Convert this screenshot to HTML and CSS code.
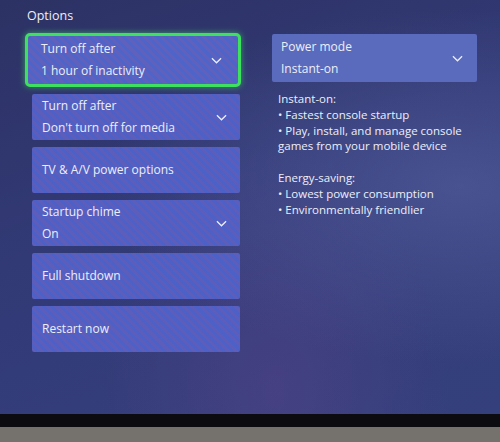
FILE: index.html
```html
<!DOCTYPE html>
<html lang="en">

<head>
    <meta charset="UTF-8">
    <meta name="viewport" content="width=device-width, initial-scale=1.0">
    <title>Power options</title>
    <link rel="stylesheet" href="styles.css">
</head>

<body>
    <div class="screen">
        <div class="left-col">
            <h2 class="section-title">Options</h2>
            <div class="option-list">
                <div class="option-card focused">
                    <div class="option-text">
                        <span>Turn off after</span>
                        <span>1 hour of inactivity</span>
                    </div>
                    <svg class="chevron" viewBox="0 0 12 7"><polyline points="1,1 6,6 11,1" /></svg>
                </div>
                <div class="option-card">
                    <div class="option-text">
                        <span>Turn off after</span>
                        <span>Don't turn off for media</span>
                    </div>
                    <svg class="chevron" viewBox="0 0 12 7"><polyline points="1,1 6,6 11,1" /></svg>
                </div>
                <div class="option-card">
                    <div class="option-text">
                        <span>TV &amp; A/V power options</span>
                    </div>
                </div>
                <div class="option-card">
                    <div class="option-text">
                        <span>Startup chime</span>
                        <span>On</span>
                    </div>
                    <svg class="chevron" viewBox="0 0 12 7"><polyline points="1,1 6,6 11,1" /></svg>
                </div>
                <div class="option-card">
                    <div class="option-text">
                        <span>Full shutdown</span>
                    </div>
                </div>
                <div class="option-card">
                    <div class="option-text">
                        <span>Restart now</span>
                    </div>
                </div>
            </div>
        </div>

        <div class="right-col">
            <div class="option-card power-mode">
                <div class="option-text">
                    <span>Power mode</span>
                    <span>Instant-on</span>
                </div>
                <svg class="chevron" viewBox="0 0 12 7"><polyline points="1,1 6,6 11,1" /></svg>
            </div>
            <div class="mode-info">
                <p>Instant-on:<br>
                    • Fastest console startup<br>
                    • Play, install, and manage console<br>
                    games from your mobile device</p>
                <p>Energy-saving:<br>
                    • Lowest power consumption<br>
                    • Environmentally friendlier</p>
            </div>
        </div>
    </div>
    <div class="bezel"></div>
    <div class="floor"></div>
</body>

</html>
```

FILE: styles.css
```css
:root {
    --card-bg: #4f5fc0;
    --card-bg-light: #5a6abc;
    --focus-color: #3fe060;
    --text-color: #eceff9;
}

* {
    box-sizing: border-box;
    margin: 0;
    padding: 0;
}

body {
    width: 500px;
    height: 442px;
    overflow: hidden;
    background-color: #75716d;
    font-family: "Open Sans", "Noto Sans", sans-serif;
    color: var(--text-color);
}

.screen {
    height: 414px;
    display: flex;
    gap: 32px;
    padding: 6px 23px 0 32px;
    background:
        radial-gradient(ellipse at 92% 45%, rgba(95, 105, 170, 0.5), transparent 55%),
        radial-gradient(ellipse at 55% 95%, rgba(110, 70, 150, 0.3), transparent 45%),
        linear-gradient(160deg, #2d3264 0%, #323a76 45%, #34407c 100%);
}

.left-col {
    width: 208px;
    display: flex;
    flex-direction: column;
}

.section-title {
    font-size: 12.5px;
    font-weight: 400;
    line-height: 20px;
    margin-left: -5px;
    margin-bottom: 7px;
}

.option-list {
    display: flex;
    flex-direction: column;
    gap: 7px;
}

.option-card {
    height: 46px;
    display: flex;
    align-items: center;
    justify-content: space-between;
    padding: 0 13px 0 10px;
    background-color: var(--card-bg);
    /* screen moire from the photo */
    background-image: repeating-linear-gradient(45deg, rgba(125, 90, 175, 0.3) 0 3px, rgba(70, 100, 215, 0.3) 3px 6px);
    border-radius: 2px;
}

.option-card.focused {
    height: 54px;
    margin: 0 -1px 0 -7px;
    padding-left: 13px;
    padding-right: 16px;
    border: 3px solid var(--focus-color);
    border-radius: 5px;
    box-shadow: 0 0 6px rgba(63, 224, 96, 0.6);
    background-color: #5264c4;
}

.option-text {
    display: flex;
    flex-direction: column;
    gap: 4px;
    font-size: 12px;
    line-height: 18px;
}

.chevron {
    width: 11px;
    height: 7px;
    fill: none;
    stroke: var(--text-color);
    stroke-width: 1.4;
}

.right-col {
    width: 205px;
    padding-top: 28px;
}

.option-card.power-mode {
    height: 48px;
    padding-left: 9px;
    padding-right: 14px;
    background-color: var(--card-bg-light);
    background-image: none;
}

.mode-info {
    padding: 9px 0 0 6px;
    font-size: 11.5px;
    line-height: 15.8px;
}

.mode-info p {
    margin-bottom: 15.8px;
}

.bezel {
    height: 13px;
    background-color: #0b0b10;
}

.floor {
    height: 15px;
    background-color: #75716d;
}
```
